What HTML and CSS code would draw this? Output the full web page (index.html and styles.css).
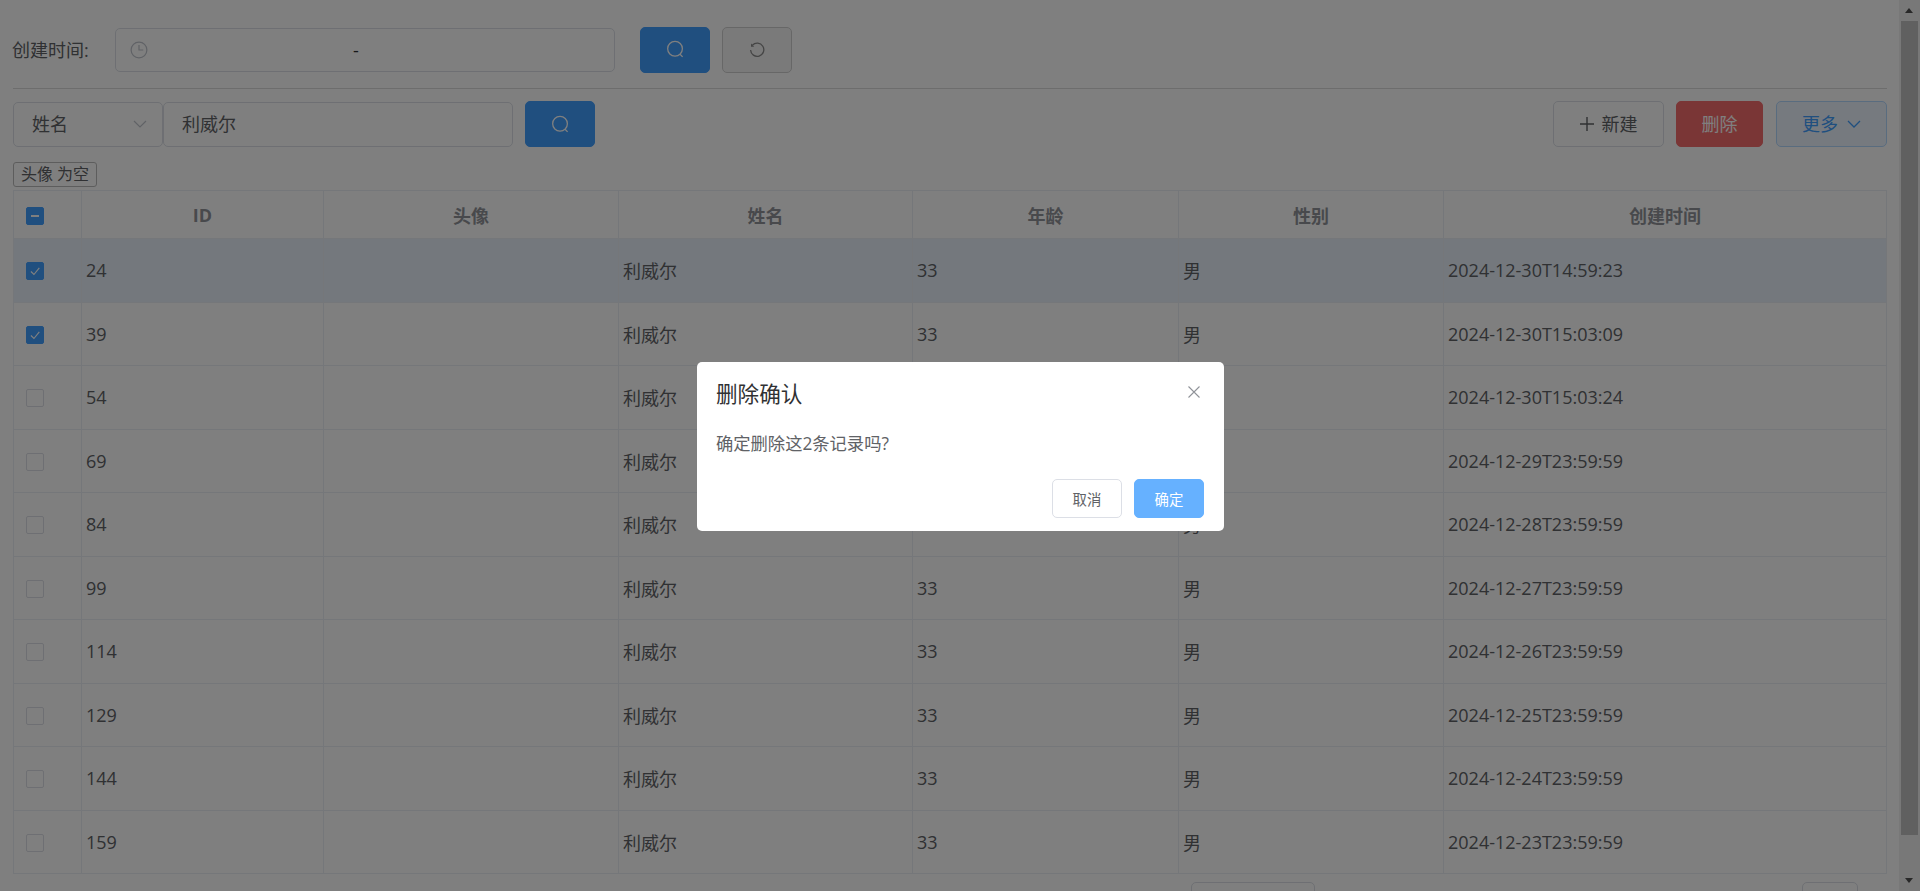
FILE: index.html
```html
<!DOCTYPE html>
<html lang="zh-CN">
<head>
  <meta charset="UTF-8">
  <title>用户列表</title>
  <meta name="viewport" content="width=device-width, initial-scale=1.0">
  <link rel="stylesheet" href="styles.css">
</head>
<body>

<div class="app">
  <div class="page">

    <div class="date-form">
      <span class="form-label">创建时间:</span>
      <div class="date-input">
        <svg class="clock-icon" viewBox="0 0 16 16"><circle cx="8" cy="8" r="7"/><path d="M8 3.6V8h3.8"/></svg>
        <span class="date-sep">-</span>
      </div>
      <button class="btn btn-primary btn-search">
        <svg class="search-icon" viewBox="0 0 16 16"><circle cx="7.6" cy="7.4" r="6.2"/><path d="M11.8 12l2.2 2.2"/></svg>
      </button>
      <button class="btn btn-reset">
        <svg class="reset-icon" viewBox="0 0 16 16"><path d="M3.4 3.2A6.6 6.6 0 1 1 1.6 8"/><path class="fill" d="M2 1.4l3.2 3.4H2z"/></svg>
      </button>
    </div>

    <div class="toolbar">
      <div class="select-box">
        <span>姓名</span>
        <svg class="chevron" viewBox="0 0 14 8"><path d="M1 1l6 6 6-6"/></svg>
      </div>
      <div class="keyword-input">利威尔</div>
      <button class="btn btn-primary btn-search">
        <svg class="search-icon" viewBox="0 0 16 16"><circle cx="7.6" cy="7.4" r="6.2"/><path d="M11.8 12l2.2 2.2"/></svg>
      </button>
      <div class="toolbar-right">
        <button class="btn btn-new">
          <svg class="plus-icon" viewBox="0 0 14 14"><path d="M7 0v14M0 7h14"/></svg>
          <span class="btn-text">新建</span>
        </button>
        <button class="btn btn-danger"><span class="btn-text">删除</span></button>
        <button class="btn btn-more">
          <span class="btn-text">更多</span>
          <svg class="chevron" viewBox="0 0 14 8"><path d="M1 1l6 6 6-6"/></svg>
        </button>
      </div>
    </div>

    <div class="tag-row"><span class="filter-tag">头像 为空</span></div>

    <table class="data-table">
      <colgroup>
        <col class="col-check"><col class="col-id"><col class="col-avatar"><col class="col-name"><col class="col-age"><col class="col-gender"><col>
      </colgroup>
      <thead>
        <tr>
          <th class="cell-check"><span class="checkbox checked"><i class="dash"></i></span></th>
          <th>ID</th><th>头像</th><th>姓名</th><th>年龄</th><th>性别</th><th>创建时间</th>
        </tr>
      </thead>
      <tbody id="rows"></tbody>
    </table>

    <div class="pager">
      <div class="pager-size"></div>
      <div class="pager-jump"></div>
    </div>
  </div>

  <div class="scrollbar">
    <span class="arrow-up"></span>
    <div class="scroll-thumb"></div>
    <span class="arrow-down"></span>
  </div>
</div>

<div class="overlay">
  <div class="dialog">
    <div class="dialog-head">
      <span class="dialog-title">删除确认</span>
      <svg class="close-icon" viewBox="0 0 12 12"><path d="M.5.5l11 11M11.5.5l-11 11"/></svg>
    </div>
    <p class="dialog-text">确定删除这2条记录吗?</p>
    <div class="dialog-foot">
      <button class="btn btn-cancel">取消</button>
      <button class="btn btn-ok">确定</button>
    </div>
  </div>
</div>

<script>
  const records = [
    [24, "2024-12-30T14:59:23", true],
    [39, "2024-12-30T15:03:09", true],
    [54, "2024-12-30T15:03:24"],
    [69, "2024-12-29T23:59:59"],
    [84, "2024-12-28T23:59:59"],
    [99, "2024-12-27T23:59:59"],
    [114, "2024-12-26T23:59:59"],
    [129, "2024-12-25T23:59:59"],
    [144, "2024-12-24T23:59:59"],
    [159, "2024-12-23T23:59:59"]
  ];

  const tick = '<svg viewBox="0 0 12 12"><path d="M2.5 6.4l2.6 2.6 4.6-5.6"/></svg>';

  document.getElementById("rows").innerHTML = records.map((r, i) => `
    <tr class="${i === 0 ? "row-current" : ""}">
      <td class="cell-check"><span class="checkbox ${r[2] ? "checked" : ""}">${r[2] ? tick : ""}</span></td>
      <td>${r[0]}</td>
      <td></td>
      <td>利威尔</td>
      <td>33</td>
      <td>男</td>
      <td>${r[1]}</td>
    </tr>`).join("");
</script>

</body>
</html>
```

FILE: styles.css
```css
* {
  box-sizing: border-box;
}

html, body {
  margin: 0;
  height: 100%;
  overflow: hidden;
}

body {
  font-family: "Open Sans", "Noto Sans CJK SC", sans-serif;
  font-size: 18px;
  color: #606266;
  background: #fff;
}

.app {
  display: flex;
  height: 891px;
  overflow: hidden;
}

.page {
  flex: 1;
  min-width: 0;
  padding: 27px 12px 0 13px;
}

/* date filter */
.date-form {
  display: flex;
  align-items: center;
  height: 62px;
  padding-bottom: 16px;
  border-bottom: 1px solid #dadada;
}

.form-label {
  width: 103px;
  margin-left: -1px;
  padding-bottom: 2px;
  flex: none;
}

.date-input {
  position: relative;
  width: 500px;
  height: 44px;
  border: 1px solid #dcdfe6;
  border-radius: 5px;
  display: flex;
  align-items: center;
}

.clock-icon {
  width: 18px;
  height: 18px;
  margin-left: 14px;
  fill: none;
  stroke: #c0c4cc;
  stroke-width: 1.1;
}

.date-sep {
  position: absolute;
  left: 237px;
  color: #303133;
}

.btn {
  font-family: inherit;
  font-size: 18px;
  height: 46px;
  width: 70px;
  padding: 0;
  border-radius: 5px;
  border: 1px solid #dcdfe6;
  background: #fff;
  color: #606266;
  display: flex;
  align-items: center;
  justify-content: center;
  cursor: pointer;
}

.btn-text {
  margin-top: -2px;
}

.btn-primary {
  background: #409eff;
  border-color: #409eff;
}

.btn-search {
  margin-left: 25px;
}

.search-icon {
  width: 19px;
  height: 19px;
  fill: none;
  stroke: #fff;
  stroke-width: 1.1;
}

.btn-reset {
  margin-left: 12px;
  background: #f5f5f5;
  border-color: #cfcfcf;
}

.reset-icon {
  width: 16px;
  height: 16px;
  fill: none;
  stroke: #8a8a8a;
  stroke-width: 1.3;
}

.reset-icon .fill {
  fill: #8a8a8a;
  stroke: none;
}

/* search toolbar */
.toolbar {
  display: flex;
  align-items: center;
  margin-top: 12px;
  height: 46px;
}

.select-box {
  width: 150px;
  height: 45px;
  border: 1px solid #dcdfe6;
  border-radius: 5px;
  padding: 0 15px 3px 18px;
  display: flex;
  align-items: center;
  justify-content: space-between;
}

.select-box .chevron {
  width: 14px;
  height: 8px;
  margin-top: 3px;
  fill: none;
  stroke: #c0c4cc;
  stroke-width: 1.2;
}

.keyword-input {
  width: 350px;
  height: 45px;
  border: 1px solid #dcdfe6;
  border-radius: 5px;
  padding: 0 0 3px 18px;
  display: flex;
  align-items: center;
}

.toolbar .btn-search {
  margin-left: 12px;
}

.toolbar-right {
  margin-left: auto;
  display: flex;
  gap: 12px;
}

.btn-new {
  width: 111px;
  gap: 8px;
}

.plus-icon {
  width: 14px;
  height: 14px;
  fill: none;
  stroke: #606266;
  stroke-width: 1.4;
}

.btn-danger {
  width: 87px;
  margin-right: 1px;
  background: #f56c6c;
  border-color: #f56c6c;
  color: #fff;
}

.btn-more {
  width: 111px;
  gap: 9px;
  background: #ecf5ff;
  border-color: #b3d8ff;
  color: #409eff;
}

.btn-more .chevron {
  width: 14px;
  height: 8px;
  fill: none;
  stroke: #409eff;
  stroke-width: 1.3;
}

/* tag */
.tag-row {
  margin-top: 14px;
  height: 29px;
}

.filter-tag {
  display: inline-block;
  height: 25px;
  line-height: 23px;
  width: 84px;
  text-align: center;
  font-size: 16px;
  border: 1px solid #bbb;
  border-radius: 3px;
  color: #606266;
}

/* table */
.data-table {
  width: 100%;
  border-collapse: collapse;
  table-layout: fixed;
  border: 1px solid #ebeef5;
}

.col-check { width: 68px; }
.col-id { width: 242px; }
.col-avatar { width: 295px; }
.col-name { width: 294px; }
.col-age { width: 266px; }
.col-gender { width: 265px; }

.data-table th,
.data-table td {
  border: 1px solid #ebeef5;
  padding: 0 4px;
  text-align: left;
  font-weight: normal;
}

.data-table th {
  height: 48px;
  text-align: center;
  font-weight: bold;
  color: #909399;
  background: #fff;
}

.data-table td {
  height: 63.5px;
}

.data-table td.cell-check,
.data-table th.cell-check {
  text-align: left;
  padding-left: 12px;
}

.row-current td {
  background: #e8f1fb;
}

.checkbox {
  display: flex;
  align-items: center;
  justify-content: center;
  width: 18px;
  height: 18px;
  margin-top: 2px;
  border: 1px solid #dcdfe6;
  border-radius: 2px;
  background: #fff;
}

.checkbox.checked {
  background: #409eff;
  border-color: #409eff;
}

.checkbox svg {
  width: 14px;
  height: 14px;
  fill: none;
  stroke: #fff;
  stroke-width: 1;
}

.checkbox .dash {
  width: 8px;
  height: 2px;
  background: #fff;
}

/* pager, cut off by the fold */
.pager {
  display: flex;
  margin-top: 8px;
  padding-left: 1178px;
}

.pager-size {
  width: 124px;
  height: 40px;
  border: 1px solid #dcdfe6;
  border-radius: 5px;
}

.pager-jump {
  width: 56px;
  height: 40px;
  margin-left: 487px;
  border: 1px solid #dcdfe6;
  border-radius: 5px;
}

/* scrollbar */
.scrollbar {
  position: relative;
  flex: none;
  width: 21px;
  background: #f1f1f1;
}

.scroll-thumb {
  position: absolute;
  left: 2px;
  right: 2px;
  top: 21px;
  height: 814px;
  background: #c1c1c1;
}

.arrow-up,
.arrow-down {
  position: absolute;
  left: 6px;
  width: 0;
  height: 0;
  border-left: 4px solid transparent;
  border-right: 4px solid transparent;
}

.arrow-up {
  top: 8px;
  border-bottom: 5px solid #505050;
}

.arrow-down {
  bottom: 8px;
  border-top: 5px solid #505050;
}

/* dialog */
.overlay {
  position: fixed;
  inset: 0;
  background: rgba(0, 0, 0, 0.5);
}

.dialog {
  position: absolute;
  left: 697px;
  top: 362px;
  width: 527px;
  height: 169px;
  background: #fff;
  border-radius: 5px;
  padding: 16px 20px 15px 19px;
}

.dialog-head {
  display: flex;
  justify-content: space-between;
  align-items: flex-start;
  height: 32px;
}

.dialog-title {
  font-size: 21.6px;
  line-height: 32px;
  color: #303133;
}

.close-icon {
  width: 12px;
  height: 12px;
  margin-top: 8px;
  margin-right: 4px;
  fill: none;
  stroke: #909399;
  stroke-width: 1.1;
}

.dialog-text {
  margin: 21px 0 0;
  font-size: 17.3px;
  line-height: 26px;
  color: #606266;
}

.dialog-foot {
  display: flex;
  justify-content: flex-end;
  gap: 12px;
  margin-top: 22px;
}

.dialog-foot .btn {
  width: 70px;
  height: 39px;
  font-size: 14.4px;
}

.btn-ok {
  background: #66b1ff;
  border-color: #66b1ff;
  color: #fff;
}
```
